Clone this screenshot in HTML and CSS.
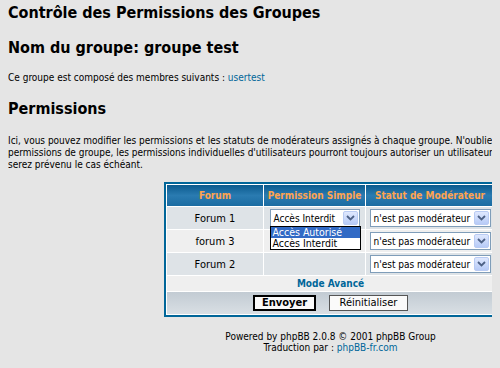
FILE: index.html
```html
<!DOCTYPE html>
<html lang="fr">
<head>
    <meta charset="UTF-8">
    <title>Contrôle des Permissions des Groupes</title>
    <link rel="stylesheet" href="styles.css">
</head>
<body>
    <div class="page">
        <h1 class="maintitle first">Contrôle des Permissions des Groupes</h1>
        <h1 class="maintitle group-name">Nom du groupe: groupe test</h1>
        <p class="members">Ce groupe est composé des membres suivants : <a href="#">usertest</a></p>
        <h2 class="maintitle perm-title">Permissions</h2>
        <p class="explain">Ici, vous pouvez modifier les permissions et les statuts de modérateurs assignés à chaque groupe. N'oubliez pas qu'en changeant les<br>permissions de groupe, les permissions individuelles d'utilisateurs pourront toujours autoriser un utilisateur à entrer dans un forum, etc. Vous<br>serez prévenu le cas échéant.</p>

        <table class="forumline">
            <tr>
                <th class="col-forum">Forum</th>
                <th class="col-perm">Permission Simple</th>
                <th class="col-mod">Statut de Modérateur</th>
            </tr>
            <tr class="row-blue">
                <td class="forum-name">Forum 1</td>
                <td>
                    <span class="select perm-select open">
                        <span class="select-text">Accès Interdit</span>
                        <span class="select-arrow"><svg width="9" height="6" viewBox="0 0 9 6"><path d="M1 1 L4.5 4.5 L8 1" fill="none" stroke="#4d6185" stroke-width="1.8"/></svg></span>
                        <span class="dropdown">
                            <span class="option selected">Accès Autorisé</span>
                            <span class="option">Accès Interdit</span>
                        </span>
                    </span>
                </td>
                <td>
                    <span class="select mod-select">
                        <span class="select-text">n'est pas modérateur</span>
                        <span class="select-arrow"><svg width="9" height="6" viewBox="0 0 9 6"><path d="M1 1 L4.5 4.5 L8 1" fill="none" stroke="#4d6185" stroke-width="1.8"/></svg></span>
                    </span>
                </td>
            </tr>
            <tr class="row-grey">
                <td class="forum-name">forum 3</td>
                <td></td>
                <td>
                    <span class="select mod-select">
                        <span class="select-text">n'est pas modérateur</span>
                        <span class="select-arrow"><svg width="9" height="6" viewBox="0 0 9 6"><path d="M1 1 L4.5 4.5 L8 1" fill="none" stroke="#4d6185" stroke-width="1.8"/></svg></span>
                    </span>
                </td>
            </tr>
            <tr class="row-blue">
                <td class="forum-name">Forum 2</td>
                <td></td>
                <td>
                    <span class="select mod-select">
                        <span class="select-text">n'est pas modérateur</span>
                        <span class="select-arrow"><svg width="9" height="6" viewBox="0 0 9 6"><path d="M1 1 L4.5 4.5 L8 1" fill="none" stroke="#4d6185" stroke-width="1.8"/></svg></span>
                    </span>
                </td>
            </tr>
            <tr class="row-grey mode-row">
                <td colspan="3"><a href="#" class="mode-link">Mode Avancé</a></td>
            </tr>
            <tr class="cat-bottom">
                <td colspan="3">
                    <button class="mainoption">Envoyer</button>
                    <button class="liteoption">Réinitialiser</button>
                </td>
            </tr>
        </table>

        <div class="copyright">
            Powered by phpBB 2.0.8 &copy; 2001 phpBB Group<br>
            Traduction par : <a href="#">phpBB-fr.com</a>
        </div>
    </div>
</body>
</html>
```

FILE: styles.css
```css
html, body {
    overflow: hidden;
}

body {
    margin: 0 8px;
    background-color: #e5e5e5;
    font-family: "DejaVu Sans Condensed", "Liberation Sans", sans-serif;
    font-size: 10px;
    color: #000;
}

a {
    color: #006699;
    text-decoration: none;
}

.page {
    width: 645px;
}

.maintitle {
    font-size: 16px;
    font-weight: bold;
    line-height: 22px;
    margin: 0;
}

.first {
    margin-top: 2px;
}

.group-name {
    margin-top: 13px;
}

.members {
    margin: 13px 0 0;
    line-height: 12px;
}

.perm-title {
    margin-top: 14px;
}

.explain {
    margin: 15px 0 0;
    line-height: 12px;
    white-space: nowrap;
}

/* tableau des permissions */
.forumline {
    margin: 11px auto 0;
    width: 333px;
    border: 2px solid #006699;
    border-spacing: 1px;
    background-color: #fff;
}

.forumline th,
.forumline td {
    padding: 0;
    text-align: center;
    vertical-align: middle;
}

.forumline th {
    height: 21px;
    font-size: 10px;
    font-weight: bold;
    color: #ffa34f;
    background: linear-gradient(#0c5b8e 0%, #2a7bb1 50%, #1a6ca2 100%);
}

.col-forum { width: 96px; }
.col-perm { width: 101px; }
.col-mod { width: 128px; }

.row-blue td,
.row-grey td {
    height: 22px;
}

.row-blue td {
    background-color: #dee3e7;
}

.row-grey td {
    background-color: #efefef;
}

.forum-name {
    font-size: 11px;
}

.mode-row td {
    height: 15px;
}

.mode-link {
    font-weight: bold;
    font-size: 10px;
}

.cat-bottom td {
    height: 22px;
    background: linear-gradient(#c2cbd3, #d9dfe4);
}

/* listes déroulantes */
.select {
    position: relative;
    display: inline-flex;
    align-items: center;
    justify-content: space-between;
    box-sizing: border-box;
    height: 18px;
    padding: 0 1px 0 3px;
    border: 1px solid #7f9db9;
    background-color: #fff;
    font-size: 10px;
    text-align: left;
    vertical-align: middle;
}

.perm-select { width: 90px; }
.mod-select { width: 121px; }

.select-text {
    white-space: nowrap;
}

.select-arrow {
    display: flex;
    align-items: center;
    justify-content: center;
    box-sizing: border-box;
    width: 15px;
    height: 14px;
    border: 1px solid #b9cbf3;
    border-radius: 2px;
    background: linear-gradient(#dfe8fe, #b7cbf7);
}

.dropdown {
    position: absolute;
    left: -1px;
    top: 16px;
    width: 91px;
    box-sizing: border-box;
    border: 1px solid #000;
    background-color: #fff;
    font-size: 10.5px;
    z-index: 2;
}

.option {
    display: block;
    height: 11px;
    line-height: 11px;
    padding: 0 2px;
    white-space: nowrap;
}

.option.selected {
    background-color: #316ac5;
    color: #fff;
}

/* boutons */
button {
    font-family: inherit;
    font-size: 11px;
    height: 16px;
    padding: 0 6px;
    margin: 0 5px;
    background-color: #fafafa;
    line-height: 12px;
    vertical-align: middle;
}

.mainoption {
    width: 63px;
    font-weight: bold;
    border: 2px solid #000;
}

.liteoption {
    width: 79px;
    border: 1px solid #555;
}

.copyright {
    margin-top: 14px;
    text-align: center;
    line-height: 11px;
}
```
